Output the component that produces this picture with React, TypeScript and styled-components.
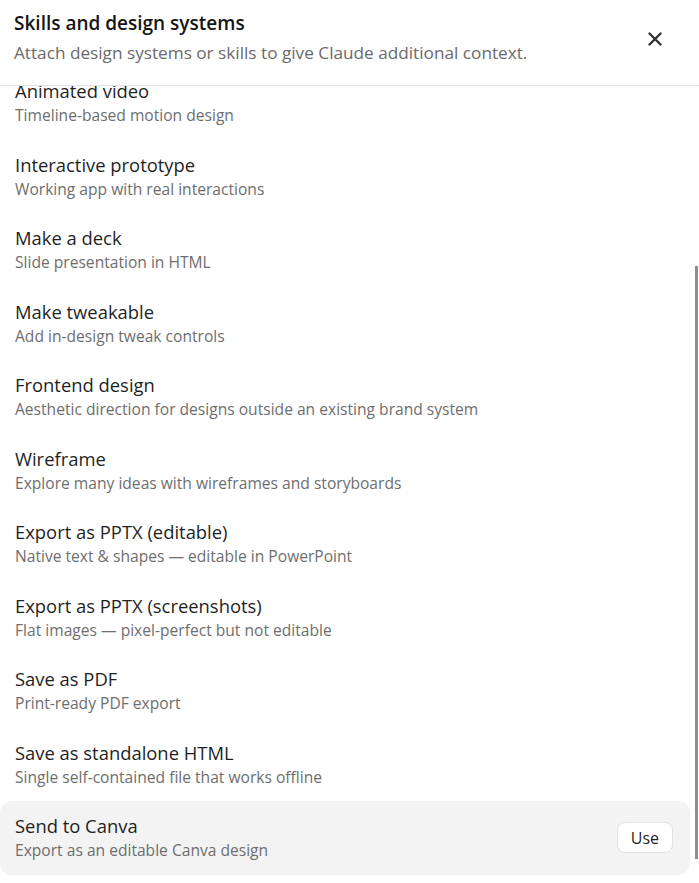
import * as React from 'react';
import styled, {createGlobalStyle} from 'styled-components';

interface Skill {
    name: string;
    description: string;
}

const SKILLS: Skill[] = [
    {name: 'Animated video', description: 'Timeline-based motion design'},
    {name: 'Interactive prototype', description: 'Working app with real interactions'},
    {name: 'Make a deck', description: 'Slide presentation in HTML'},
    {name: 'Make tweakable', description: 'Add in-design tweak controls'},
    {name: 'Frontend design', description: 'Aesthetic direction for designs outside an existing brand system'},
    {name: 'Wireframe', description: 'Explore many ideas with wireframes and storyboards'},
    {name: 'Export as PPTX (editable)', description: 'Native text & shapes \u2014 editable in PowerPoint'},
    {name: 'Export as PPTX (screenshots)', description: 'Flat images \u2014 pixel-perfect but not editable'},
    {name: 'Save as PDF', description: 'Print-ready PDF export'},
    {name: 'Save as standalone HTML', description: 'Single self-contained file that works offline'},
    {name: 'Send to Canva', description: 'Export as an editable Canva design'},
];

const GlobalStyle = createGlobalStyle`
    html, body {
        margin: 0;
        padding: 0;
        background: #ffffff;
    }

    body {
        font-family: 'Open Sans', 'Noto Sans', sans-serif;
        color: #1f1f1f;
    }
`;

const Dialog = styled.div`
    display: flex;
    flex-direction: column;
    width: 699px;
    height: 883px;
    overflow: hidden;
    background: #ffffff;
`;

const Header = styled.div`
    display: flex;
    justify-content: space-between;
    align-items: flex-start;
    height: 86px;
    box-sizing: border-box;
    padding: 9px 30px 0 14px;
    border-bottom: 1px solid #e4e4e4;
    box-shadow: 0 1px 2px rgba(0, 0, 0, 0.04);
    position: relative;
    z-index: 1;
`;

const HeaderText = styled.div`
    display: flex;
    flex-direction: column;
    gap: 3px;
`;

const Title = styled.h2`
    margin: 0;
    font-size: 19px;
    line-height: 29px;
    font-weight: 600;
    color: #141414;
`;

const Subtitle = styled.p`
    margin: 0;
    font-size: 17.2px;
    line-height: 24px;
    color: #6a6a6a;
`;

const CloseButton = styled.button`
    display: flex;
    align-items: center;
    justify-content: center;
    width: 28px;
    height: 28px;
    margin-top: 16px;
    padding: 0;
    border: none;
    background: transparent;
    color: #333333;
    cursor: pointer;
`;

const ListArea = styled.div`
    flex: 1;
    position: relative;
    overflow: hidden;
`;

const List = styled.div`
    display: flex;
    flex-direction: column;
    margin-top: -20px;
    padding-right: 9px;
`;

const Item = styled.div<{$active?: boolean}>`
    display: flex;
    align-items: center;
    justify-content: space-between;
    height: 73.5px;
    box-sizing: border-box;
    padding: 0 17px 0 15px;
    border-radius: 12px;
    background: ${(p) => (p.$active ? '#f3f3f3' : 'transparent')};
`;

const ItemText = styled.div`
    display: flex;
    flex-direction: column;
`;

const ItemName = styled.div`
    font-size: 18.4px;
    line-height: 25px;
    color: #1f1f1f;
`;

const ItemDescription = styled.div`
    font-size: 15.6px;
    line-height: 24.5px;
    color: #6e6e6e;
`;

const UseButton = styled.button`
    height: 31px;
    padding: 0 13px;
    border: 1px solid #e2e2e2;
    border-radius: 8px;
    background: #ffffff;
    font-family: inherit;
    font-size: 16px;
    color: #1f1f1f;
    cursor: pointer;
`;

const ScrollThumb = styled.div`
    position: absolute;
    right: 1px;
    top: 180px;
    width: 3px;
    height: 593px;
    background: #8e8e8e;
`;

const CloseIcon: React.FC = () => (
    <svg width="14" height="14" viewBox="0 0 14 14" fill="none">
        <path d="M1.5 1.5 L12.5 12.5 M12.5 1.5 L1.5 12.5" stroke="currentColor" strokeWidth="2.4" strokeLinecap="round" />
    </svg>
);

const App: React.FC = () => {
    const last = SKILLS.length - 1;
    return (
        <Dialog>
            <GlobalStyle />
            <Header>
                <HeaderText>
                    <Title>Skills and design systems</Title>
                    <Subtitle>Attach design systems or skills to give Claude additional context.</Subtitle>
                </HeaderText>
                <CloseButton aria-label="Close">
                    <CloseIcon />
                </CloseButton>
            </Header>
            <ListArea>
                <List>
                    {SKILLS.map((skill, i) => (
                        <Item key={skill.name} $active={i === last}>
                            <ItemText>
                                <ItemName>{skill.name}</ItemName>
                                <ItemDescription>{skill.description}</ItemDescription>
                            </ItemText>
                            {i === last && <UseButton>Use</UseButton>}
                        </Item>
                    ))}
                </List>
                <ScrollThumb />
            </ListArea>
        </Dialog>
    );
};

export default App;
